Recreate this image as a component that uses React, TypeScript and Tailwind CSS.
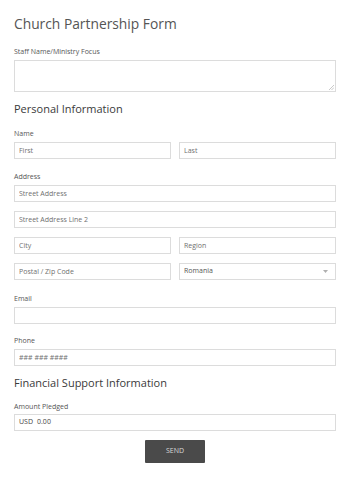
const font = { fontFamily: '"Open Sans", "Liberation Sans", sans-serif' };

function Label({ text, className }: { text: string; className?: string }) {
    return <div className={`text-[7px] leading-[10px] text-[#555] ${className ?? ""}`}>{text}</div>;
}

function Field({ placeholder, className, value }: { placeholder?: string; className?: string; value?: string }) {
    return (
        <input
            readOnly
            defaultValue={value}
            placeholder={placeholder}
            className={`block w-full h-[17px] border border-[#dcdcdc] bg-white px-[4px] text-[7px] text-[#555] placeholder:text-[#707070] outline-none ${className ?? ""}`}
            style={font}
        />
    );
}

export default function App() {
    return (
        <div className="min-h-[477px] w-[350px] bg-white px-[14px] pb-[14px]" style={font}>
            <h1 className="pt-[14px] text-[13.8px] leading-[20px] font-normal text-[#555]">Church Partnership Form</h1>

            <Label text="Staff Name/Ministry Focus" className="mt-[13px]" />
            <div className="relative mt-[3px]">
                <textarea
                    readOnly
                    className="block w-full h-[32px] border border-[#dcdcdc] bg-white outline-none resize-none"
                />
                <svg width="5" height="5" viewBox="0 0 5 5" className="absolute right-[2px] bottom-[2px]">
                    <path d="M5 0 L0 5 M5 2.5 L2.5 5" stroke="#bbb" strokeWidth="0.8" />
                </svg>
            </div>

            <h2 className="mt-[10px] text-[11px] leading-[14px] font-medium text-[#3a3a3a]">Personal Information</h2>

            <Label text="Name" className="mt-[13px]" />
            <div className="mt-[3px] grid grid-cols-2 gap-2">
                <Field placeholder="First" />
                <Field placeholder="Last" />
            </div>

            <Label text="Address" className="mt-[13px]" />
            <Field placeholder="Street Address" className="mt-[3px]" />
            <Field placeholder="Street Address Line 2" className="mt-[9px]" />
            <div className="mt-[9px] grid grid-cols-2 gap-2">
                <Field placeholder="City" />
                <Field placeholder="Region" />
            </div>
            <div className="mt-[9px] grid grid-cols-2 gap-2">
                <Field placeholder="Postal / Zip Code" />
                <div className="flex h-[17px] items-center justify-between border border-[#dcdcdc] bg-white px-[4px]">
                    <span className="text-[7px] text-[#555]">Romania</span>
                    <svg width="5" height="3" viewBox="0 0 5 3" className="mr-[3px]">
                        <path d="M0 0 L5 0 L2.5 3 Z" fill="#b0b0b0" />
                    </svg>
                </div>
            </div>

            <Label text="Email" className="mt-[14px]" />
            <Field className="mt-[3px]" />

            <Label text="Phone" className="mt-[12px]" />
            <Field placeholder="### ### ####" className="mt-[3px]" />

            <h2 className="mt-[10px] text-[11px] leading-[14px] font-medium text-[#3a3a3a]">Financial Support Information</h2>

            <Label text="Amount Pledged" className="mt-[12px]" />
            <div className="mt-[2px] flex h-[17px] items-center border border-[#dcdcdc] bg-white px-[4px] text-[7px] text-[#444]">
                <span>USD</span>
                <span className="ml-[4px]">0.00</span>
            </div>

            <div className="mt-[9px] flex justify-center">
                <button className="h-[23px] w-[60px] rounded-[1px] bg-[#4a4a4a] text-[7px] text-[#d8d8d8]" style={font}>
                    SEND
                </button>
            </div>
        </div>
    );
}
